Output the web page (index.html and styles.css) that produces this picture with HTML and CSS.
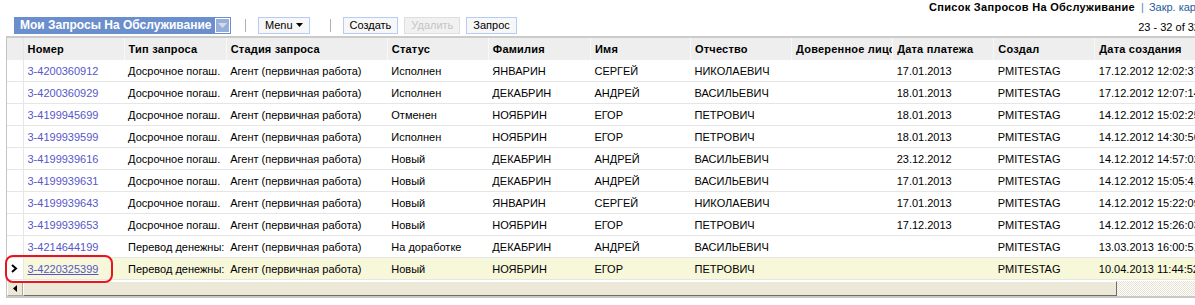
FILE: index.html
```html
<!DOCTYPE html>
<html lang="ru">
<head>
  <meta charset="UTF-8" />
  <title>Список Запросов На Обслуживание</title>
  <link rel="stylesheet" href="styles.css">
</head>
<body>
<div class="app">

  <div class="topline">
    <span class="page-title">Список Запросов На Обслуживание</span>
    <span class="pipe">|</span>
    <a class="close-link" href="#">Закр. карточку</a>
  </div>

  <div class="toolbar">
    <div class="view-select">
      <span>Мои Запросы На Обслуживание</span>
      <span class="drop"><svg width="9" height="5" viewBox="0 0 9 5"><path d="M0 0H9L4.5 5Z" fill="#d4dcea"/></svg></span>
    </div>
    <span class="sep"></span>
    <button class="btn">Menu <svg width="7" height="4" viewBox="0 0 7 4"><path d="M0 0H7L3.5 4Z" fill="#000"/></svg></button>
    <span class="sep"></span>
    <button class="btn">Создать</button>
    <button class="btn" disabled>Удалить</button>
    <button class="btn">Запрос</button>
    <span class="pager">23 - 32 of 32</span>
  </div>

  <div class="grid">
    <table>
      <colgroup>
        <col style="width:16px"><col style="width:101px"><col style="width:102px"><col style="width:161px">
        <col style="width:101px"><col style="width:102px"><col style="width:100px"><col style="width:101px">
        <col style="width:101px"><col style="width:101px"><col style="width:101px"><col style="width:115px">
      </colgroup>
      <thead>
        <tr>
          <th class="sel"></th>
          <th>Номер</th><th>Тип запроса</th><th>Стадия запроса</th><th>Статус</th><th>Фамилия</th>
          <th>Имя</th><th>Отчество</th><th>Доверенное лицо</th><th>Дата платежа</th><th>Создал</th><th>Дата создания</th>
        </tr>
      </thead>
      <tbody>
        <tr><td class="sel"></td><td><a href="#">3-4200360912</a></td><td>Досрочное погаш.</td><td>Агент (первичная работа)</td><td>Исполнен</td><td>ЯНВАРИН</td><td>СЕРГЕЙ</td><td>НИКОЛАЕВИЧ</td><td></td><td>17.01.2013</td><td>PMITESTAG</td><td>17.12.2012 12:02:37</td></tr>
        <tr><td class="sel"></td><td><a href="#">3-4200360929</a></td><td>Досрочное погаш.</td><td>Агент (первичная работа)</td><td>Исполнен</td><td>ДЕКАБРИН</td><td>АНДРЕЙ</td><td>ВАСИЛЬЕВИЧ</td><td></td><td>18.01.2013</td><td>PMITESTAG</td><td>17.12.2012 12:07:14</td></tr>
        <tr><td class="sel"></td><td><a href="#">3-4199945699</a></td><td>Досрочное погаш.</td><td>Агент (первичная работа)</td><td>Отменен</td><td>НОЯБРИН</td><td>ЕГОР</td><td>ПЕТРОВИЧ</td><td></td><td>18.01.2013</td><td>PMITESTAG</td><td>14.12.2012 15:02:25</td></tr>
        <tr><td class="sel"></td><td><a href="#">3-4199939599</a></td><td>Досрочное погаш.</td><td>Агент (первичная работа)</td><td>Исполнен</td><td>НОЯБРИН</td><td>ЕГОР</td><td>ПЕТРОВИЧ</td><td></td><td>18.01.2013</td><td>PMITESTAG</td><td>14.12.2012 14:30:56</td></tr>
        <tr><td class="sel"></td><td><a href="#">3-4199939616</a></td><td>Досрочное погаш.</td><td>Агент (первичная работа)</td><td>Новый</td><td>ДЕКАБРИН</td><td>АНДРЕЙ</td><td>ВАСИЛЬЕВИЧ</td><td></td><td>23.12.2012</td><td>PMITESTAG</td><td>14.12.2012 14:57:02</td></tr>
        <tr><td class="sel"></td><td><a href="#">3-4199939631</a></td><td>Досрочное погаш.</td><td>Агент (первичная работа)</td><td>Новый</td><td>ДЕКАБРИН</td><td>АНДРЕЙ</td><td>ВАСИЛЬЕВИЧ</td><td></td><td>17.01.2013</td><td>PMITESTAG</td><td>14.12.2012 15:05:41</td></tr>
        <tr><td class="sel"></td><td><a href="#">3-4199939643</a></td><td>Досрочное погаш.</td><td>Агент (первичная работа)</td><td>Новый</td><td>ЯНВАРИН</td><td>СЕРГЕЙ</td><td>НИКОЛАЕВИЧ</td><td></td><td>17.01.2013</td><td>PMITESTAG</td><td>14.12.2012 15:22:09</td></tr>
        <tr><td class="sel"></td><td><a href="#">3-4199939653</a></td><td>Досрочное погаш.</td><td>Агент (первичная работа)</td><td>Новый</td><td>НОЯБРИН</td><td>ЕГОР</td><td>ПЕТРОВИЧ</td><td></td><td>17.12.2013</td><td>PMITESTAG</td><td>14.12.2012 15:26:03</td></tr>
        <tr><td class="sel"></td><td><a href="#">3-4214644199</a></td><td>Перевод денежны:</td><td>Агент (первичная работа)</td><td>На доработке</td><td>ДЕКАБРИН</td><td>АНДРЕЙ</td><td>ВАСИЛЬЕВИЧ</td><td></td><td></td><td>PMITESTAG</td><td>13.03.2013 16:00:51</td></tr>
        <tr class="current"><td class="sel"><svg width="7" height="9" viewBox="0 0 7 9"><path d="M1 1L5 4.5L1 8" fill="none" stroke="#000" stroke-width="2"/></svg></td><td><a href="#">3-4220325399</a></td><td>Перевод денежны:</td><td>Агент (первичная работа)</td><td>Новый</td><td>НОЯБРИН</td><td>ЕГОР</td><td>ПЕТРОВИЧ</td><td></td><td></td><td>PMITESTAG</td><td>10.04.2013 11:44:52</td></tr>
      </tbody>
    </table>

    <div class="hscroll">
      <span class="arrow"><svg width="4" height="7" viewBox="0 0 4 7"><path d="M4 0V7L0 3.5Z" fill="#000"/></svg></span>
      <div class="track"><span class="thumb"></span></div>
    </div>

    <div class="mark"></div>
  </div>

</div>
</body>
</html>
```

FILE: styles.css
```css
body {
  margin: 0;
  font-family: 'Liberation Sans', Arial, sans-serif;
  font-size: 11px;
  color: #000;
  background: #fff;
  overflow: hidden;
}
.app {
  width: 1200px;
}

.topline {
  display: flex;
  align-items: center;
  height: 14px;
  padding-left: 929px;
  white-space: nowrap;
}
.page-title {
  font-weight: bold;
  font-size: 11px;
  letter-spacing: 0.3px;
}
.pipe {
  color: #5b7fb5;
  margin: 0 5px 0 6px;
}
.close-link {
  color: #1f5c9e;
  text-decoration: none;
  font-size: 11px;
}

.toolbar {
  display: flex;
  align-items: center;
  height: 18px;
  margin-top: 2px;
  padding-left: 14px;
}
.view-select {
  display: flex;
  align-items: center;
  height: 17px;
  width: 217px;
  box-sizing: border-box;
  padding: 0 1px 0 6px;
  background: #6b8fcd;
  color: #fff;
  font-weight: bold;
  font-size: 12px;
}
.view-select span:first-child {
  flex: 1;
}
.drop {
  display: flex;
  align-items: center;
  justify-content: center;
  width: 13px;
  height: 13px;
  border: 1px solid #fff;
  background: #98afdb;
}
.sep {
  width: 1px;
  height: 13px;
  background: #b0b0b0;
  margin: 0 12px 0 14px;
}
.btn {
  height: 17px;
  padding: 0 6px;
  margin-right: 6px;
  border: 1px solid #b5cdf5;
  background: #f7f7f7;
  font-family: inherit;
  font-size: 11px;
  color: #000;
  display: flex;
  align-items: center;
  gap: 3px;
}
.btn[disabled] {
  border-color: #dedede;
  background: #f1f1f1;
  color: #c4c4c4;
}
.pager {
  margin-left: auto;
  font-size: 11px;
  padding-top: 3px;
}

.grid {
  position: relative;
  margin: 2px 0 0 6px;
  border-top: 2px solid #cbcbcb;
  border-left: 1px solid #c4c4c4;
  border-bottom: 2px solid #c8c8c8;
}
table {
  table-layout: fixed;
  border-collapse: collapse;
  width: 1203px;
}
th, td {
  height: 21px;
  padding: 0 0 0 4px;
  text-align: left;
  white-space: nowrap;
  overflow: hidden;
}
th {
  height: 22px;
  background: #eeeeee;
  font-weight: bold;
  letter-spacing: 0.2px;
  border-left: 1px solid #f8f8f8;
}
td {
  border-bottom: 1px solid #e6e6e6;
}
th.sel, td.sel {
  padding: 0;
  border-left: none;
  border-right: 1px solid #e6e6e6;
  text-align: center;
}
td.sel svg {
  display: block;
  margin: 0 auto;
}
td a {
  color: #5757c8;
  text-decoration: none;
}
tr.current td {
  background: #f7f7da;
}
tr.current td.sel {
  background: #fff;
}
tr.current a {
  text-decoration: underline;
}

.hscroll {
  display: flex;
  height: 15px;
  margin-top: 1px;
  background: #ece9d8;
}
.arrow {
  width: 14px;
  display: flex;
  align-items: center;
  justify-content: center;
  border-top: 1px solid #fff;
  border-left: 1px solid #fff;
  border-right: 1px solid #aca899;
  border-bottom: 1px solid #aca899;
  background: #ece9d8;
}
.track {
  flex: 1;
  background: repeating-conic-gradient(#fff 0 25%, #e6e3d2 0 50%) 0 0 / 2px 2px;
}
.thumb {
  display: block;
  width: 1092px;
  height: 13px;
  background: #ece9d8;
  border-top: 1px solid #fff;
  border-left: 1px solid #fff;
  border-right: 1px solid #716f64;
  border-bottom: 1px solid #716f64;
}

.mark {
  position: absolute;
  left: -2px;
  top: 217px;
  width: 104px;
  height: 24px;
  border: 2px solid #e8141e;
  border-radius: 8px;
}
```
